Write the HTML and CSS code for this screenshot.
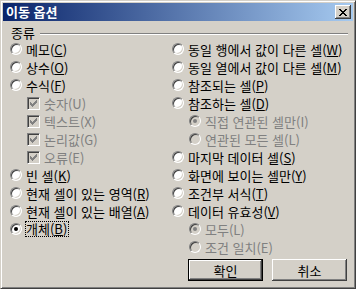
FILE: index.html
```html
<!DOCTYPE html>
<html lang="ko">
<head>
    <link rel="stylesheet" href="styles.css">
    <meta charset="UTF-8">
    <title>이동 옵션</title>
</head>
<body>
    <div class="window">
        <div class="titlebar">
            <span class="title">이동 옵션</span>
            <span class="close">
                <svg width="8" height="7" viewBox="0 0 8 7" shape-rendering="crispEdges">
                    <path d="M0 0h2v1h-2zM6 0h2v1h-2zM1 1h2v1h-2zM5 1h2v1h-2zM2 2h4v1h-4zM3 3h2v1h-2zM2 4h4v1h-4zM1 5h2v1h-2zM5 5h2v1h-2zM0 6h2v1h-2zM6 6h2v1h-2z" fill="#000"/>
                </svg>
            </span>
        </div>
        <div class="content">
            <div class="group-head">
                <span class="group-label">종류</span>
                <span class="etch"></span>
            </div>
            <div class="columns">
                <div class="col">
                    <div class="row"><span class="radio"></span><span>메모(<u>C</u>)</span></div>
                    <div class="row"><span class="radio"></span><span>상수(<u>O</u>)</span></div>
                    <div class="row"><span class="radio"></span><span>수식(<u>F</u>)</span></div>
                    <div class="row sub off"><span class="check"><svg width="7" height="7" viewBox="0 0 7 7" shape-rendering="crispEdges"><path d="M0 2h1v3h-1zM1 3h1v3h-1zM2 4h1v3h-1zM3 3h1v3h-1zM4 2h1v3h-1zM5 1h1v3h-1zM6 0h1v3h-1z" fill="#808080"/></svg></span><span>숫자(U)</span></div>
                    <div class="row sub off"><span class="check"><svg width="7" height="7" viewBox="0 0 7 7" shape-rendering="crispEdges"><path d="M0 2h1v3h-1zM1 3h1v3h-1zM2 4h1v3h-1zM3 3h1v3h-1zM4 2h1v3h-1zM5 1h1v3h-1zM6 0h1v3h-1z" fill="#808080"/></svg></span><span>텍스트(X)</span></div>
                    <div class="row sub off"><span class="check"><svg width="7" height="7" viewBox="0 0 7 7" shape-rendering="crispEdges"><path d="M0 2h1v3h-1zM1 3h1v3h-1zM2 4h1v3h-1zM3 3h1v3h-1zM4 2h1v3h-1zM5 1h1v3h-1zM6 0h1v3h-1z" fill="#808080"/></svg></span><span>논리값(G)</span></div>
                    <div class="row sub off"><span class="check"><svg width="7" height="7" viewBox="0 0 7 7" shape-rendering="crispEdges"><path d="M0 2h1v3h-1zM1 3h1v3h-1zM2 4h1v3h-1zM3 3h1v3h-1zM4 2h1v3h-1zM5 1h1v3h-1zM6 0h1v3h-1z" fill="#808080"/></svg></span><span>오류(E)</span></div>
                    <div class="row"><span class="radio"></span><span>빈 셀(<u>K</u>)</span></div>
                    <div class="row"><span class="radio"></span><span>현재 셀이 있는 영역(<u>R</u>)</span></div>
                    <div class="row"><span class="radio"></span><span>현재 셀이 있는 배열(<u>A</u>)</span></div>
                    <div class="row"><span class="radio on"></span><span class="focus">개체(<u>B</u>)</span></div>
                </div>
                <div class="col">
                    <div class="row"><span class="radio"></span><span>동일 행에서 값이 다른 셀(<u>W</u>)</span></div>
                    <div class="row"><span class="radio"></span><span>동일 열에서 값이 다른 셀(<u>M</u>)</span></div>
                    <div class="row"><span class="radio"></span><span>참조되는 셀(<u>P</u>)</span></div>
                    <div class="row"><span class="radio"></span><span>참조하는 셀(<u>D</u>)</span></div>
                    <div class="row sub off"><span class="radio on"></span><span>직접 연관된 셀만(I)</span></div>
                    <div class="row sub off"><span class="radio"></span><span>연관된 모든 셀(L)</span></div>
                    <div class="row"><span class="radio"></span><span>마지막 데이터 셀(<u>S</u>)</span></div>
                    <div class="row"><span class="radio"></span><span>화면에 보이는 셀만(<u>Y</u>)</span></div>
                    <div class="row"><span class="radio"></span><span>조건부 서식(<u>T</u>)</span></div>
                    <div class="row"><span class="radio"></span><span>데이터 유효성(<u>V</u>)</span></div>
                    <div class="row sub off"><span class="radio on"></span><span>모두(L)</span></div>
                    <div class="row sub off"><span class="radio"></span><span>조건 일치(E)</span></div>
                    <div class="buttons">
                        <span class="btn default">확인</span>
                        <span class="btn">취소</span>
                    </div>
                </div>
            </div>
        </div>
    </div>
</body>
</html>
```

FILE: styles.css
```css
body {
    margin: 0;
    font-family: "Noto Sans CJK KR", "DejaVu Sans", sans-serif;
    font-size: 13px;
    color: #000;
    background: #d4d0c8;
}

.window {
    box-sizing: border-box;
    width: 356px;
    height: 289px;
    padding: 2px;
    background: #d4d0c8;
    border: 1px solid;
    border-color: #d4d0c8 #404040 #404040 #d4d0c8;
    box-shadow: inset 1px 1px #fff, inset -1px -1px #808080;
}

.titlebar {
    height: 18px;
    display: flex;
    align-items: center;
    justify-content: space-between;
    padding: 0 2px 0 3px;
    background: linear-gradient(to right, #0a246a, #a6caf0);
}

.title {
    color: #fff;
    font-weight: bold;
    font-size: 13px;
    line-height: 18px;
}

.close {
    box-sizing: border-box;
    width: 16px;
    height: 14px;
    display: flex;
    align-items: center;
    justify-content: center;
    background: #d4d0c8;
    box-shadow: inset -1px -1px #404040, inset 1px 1px #fff, inset -2px -2px #808080;
}

.content {
    padding: 5px 0 0 7px;
}

.group-head {
    height: 14px;
    display: flex;
    align-items: center;
    gap: 5px;
    padding-left: 1px;
    margin-right: 5px;
}

.group-label {
    line-height: 14px;
}

.etch {
    flex: 1;
    height: 0;
    border-top: 1px solid #808080;
    border-bottom: 1px solid #fff;
    margin-top: 1px;
}

.columns {
    display: grid;
    grid-template-columns: 162px 1fr;
}

.row {
    height: 18px;
    display: flex;
    align-items: center;
    gap: 4px;
    white-space: nowrap;
}

.row.sub {
    padding-left: 17px;
}

.row.off {
    color: #808080;
}

.radio {
    box-sizing: border-box;
    width: 12px;
    height: 12px;
    flex: none;
    border-radius: 50%;
    background: #fff;
    border: 1px solid;
    border-color: #808080 #fff #fff #808080;
    box-shadow: inset 1px 1px #404040, inset -1px -1px #d4d0c8;
    display: flex;
    align-items: center;
    justify-content: center;
}

.off .radio {
    background: #d4d0c8;
}

.radio.on::after {
    content: "";
    width: 4px;
    height: 4px;
    border-radius: 50%;
    background: #000;
}

.off .radio.on::after {
    background: #808080;
}

.check {
    box-sizing: border-box;
    width: 13px;
    height: 13px;
    flex: none;
    background: #d4d0c8;
    border: 1px solid;
    border-color: #808080 #fff #fff #808080;
    box-shadow: inset 1px 1px #404040, inset -1px -1px #d4d0c8;
    display: flex;
    align-items: center;
    justify-content: center;
}

.focus {
    border: 1px dotted #000;
    margin-left: -1px;
    padding: 0 1px 0 0;
    line-height: 14px;
}

.buttons {
    display: flex;
    gap: 9px;
    margin-top: 3px;
    padding-left: 16px;
}

.btn {
    box-sizing: border-box;
    width: 75px;
    height: 22px;
    display: flex;
    align-items: center;
    justify-content: center;
    background: #d4d0c8;
    box-shadow: inset -1px -1px #404040, inset 1px 1px #fff, inset -2px -2px #808080;
}

.btn.default {
    border: 1px solid #000;
}
```
